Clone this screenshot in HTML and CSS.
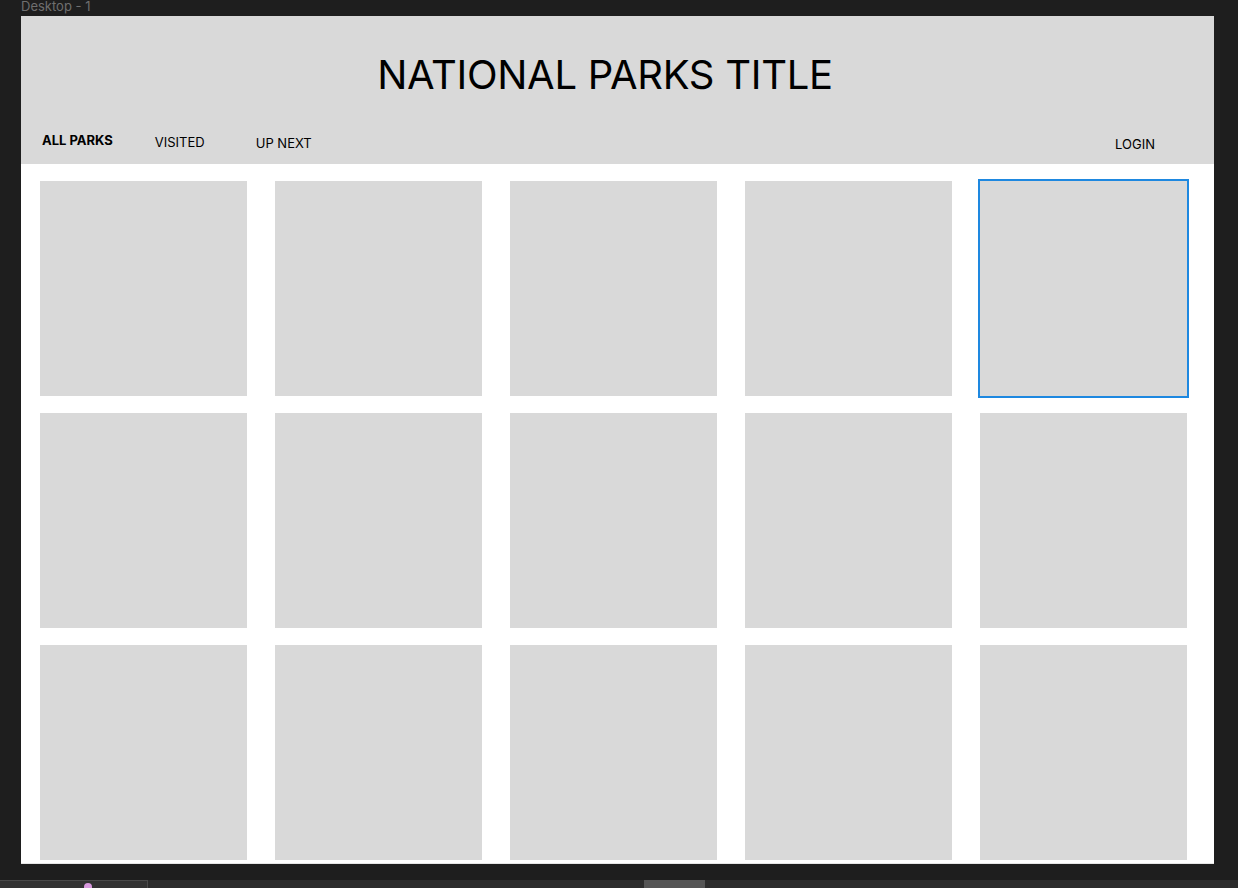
FILE: index.html
```html
<!DOCTYPE html>
<html>
<head>
<meta charset="utf-8">
<link rel="stylesheet" href="styles.css">
</head>
<body>
<div class="canvas">
  <div class="frame-label">Desktop - 1</div>
  <div class="frame">
    <header class="header">
      <h1 class="title">NATIONAL PARKS TITLE</h1>
      <nav class="nav">
        <a class="nav-item active">ALL PARKS</a>
        <a class="nav-item visited">VISITED</a>
        <a class="nav-item upnext">UP NEXT</a>
        <a class="nav-item login">LOGIN</a>
      </nav>
    </header>
    <main class="grid">
      <div class="card"></div>
      <div class="card"></div>
      <div class="card"></div>
      <div class="card"></div>
      <div class="card selected"></div>
      <div class="card"></div>
      <div class="card"></div>
      <div class="card"></div>
      <div class="card"></div>
      <div class="card"></div>
      <div class="card"></div>
      <div class="card"></div>
      <div class="card"></div>
      <div class="card"></div>
      <div class="card"></div>
    </main>
  </div>
</div>
<div class="bottombar">
  <div class="tab-left"><span class="dot"></span></div>
  <div class="tab-mid"></div>
</div>
</body>
</html>
```
FILE: styles.css
```css
html, body {
  margin: 0;
  padding: 0;
  height: 100%;
  overflow: hidden;
}
body {
  background: #1e1e1e;
  font-family: Inter, "Liberation Sans", sans-serif;
  position: relative;
}
.canvas {
  padding-left: 21px;
}
.frame-label {
  height: 16px;
  font-size: 13px;
  line-height: 13px;
  color: #6f6f6f;
}
.frame {
  width: 1193px;
  height: 848px;
  background: #ffffff;
  overflow: hidden;
  box-shadow: inset 0 -1px 0 #e6e6e6;
}
.header {
  background: #d9d9d9;
  height: 148px;
  display: flex;
  flex-direction: column;
}
.title {
  margin: 0;
  padding-top: 35px;
  padding-right: 25px;
  font-weight: 400;
  font-size: 40px;
  line-height: 48px;
  text-align: center;
  color: #000;
  letter-spacing: -0.3px;
}
.nav {
  display: flex;
  align-items: flex-start;
  padding-left: 21px;
  padding-top: 33px;
  font-size: 13px;
  color: #000;
}
.nav-item {
  line-height: 16px;
}
.active {
  font-weight: 700;
}
.visited {
  margin-left: 42px;
  margin-top: 2px;
}
.upnext {
  margin-left: 51px;
  margin-top: 3px;
}
.login {
  margin-left: auto;
  margin-right: 59px;
  margin-top: 4px;
}
.grid {
  display: grid;
  grid-template-columns: repeat(5, 207px);
  grid-auto-rows: 215px;
  column-gap: 28px;
  row-gap: 17px;
  padding: 17px 0 0 19px;
}
.card {
  background: #d9d9d9;
}
.card.selected {
  box-shadow: 0 0 0 2px #1e88e0;
}
.bottombar {
  position: absolute;
  left: 0;
  right: 0;
  bottom: 0;
  height: 8px;
  background: #2c2c2c;
}
.tab-left {
  position: absolute;
  left: 0;
  top: 0;
  width: 147px;
  height: 8px;
  border-top: 1px solid #4a4a4a;
  border-right: 1px solid #4a4a4a;
  background: #333;
}
.dot {
  position: absolute;
  left: 84px;
  top: 2px;
  width: 8px;
  height: 8px;
  border-radius: 50%;
  background: #d99adf;
}
.tab-mid {
  position: absolute;
  left: 644px;
  top: 0;
  width: 61px;
  height: 8px;
  background: #555;
}
```
